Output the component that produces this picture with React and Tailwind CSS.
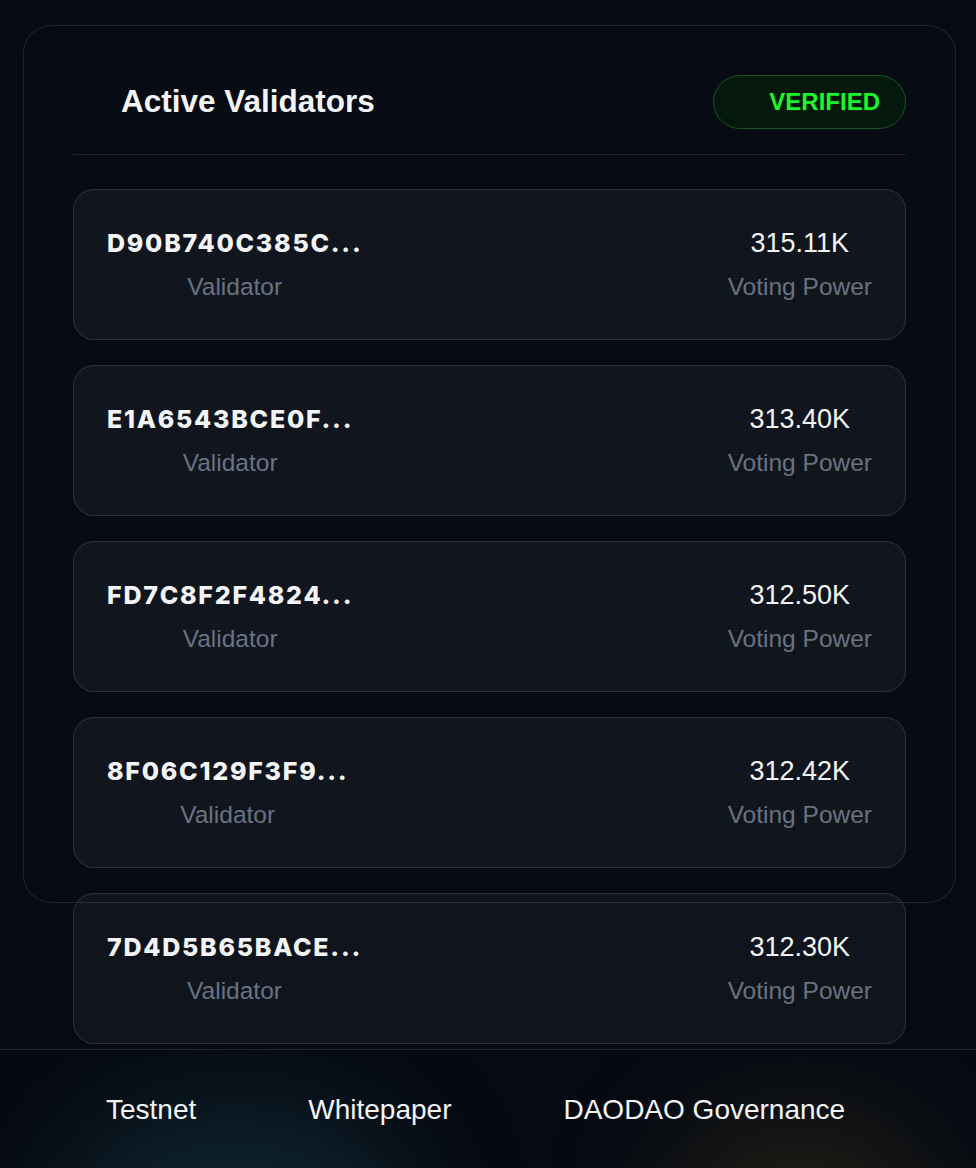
import React from 'react';

const validators = [
  { id: 'D90B740C385C...', power: '315.11K' },
  { id: 'E1A6543BCE0F...', power: '313.40K' },
  { id: 'FD7C8F2F4824...', power: '312.50K' },
  { id: '8F06C129F3F9...', power: '312.42K' },
  { id: '7D4D5B65BACE...', power: '312.30K' },
];

function ValidatorRow({ id, power }) {
  return (
    <div className="flex h-[151px] items-center justify-between rounded-[21px] border border-white/[0.12] bg-white/[0.045] px-[33px]">
      <div className="flex flex-col items-center text-center">
        <span className="font-['Inter',sans-serif] text-[25px] font-extrabold leading-[32px] tracking-[0.07em] text-gray-100">
          {id}
        </span>
        <span className="mt-3 text-[24.5px] leading-[32px] text-gray-500">Validator</span>
      </div>
      <div className="flex flex-col items-center text-center">
        <span className="text-[27px] leading-[32px] text-gray-100">{power}</span>
        <span className="mt-3 text-[24.5px] leading-[32px] text-gray-500">Voting Power</span>
      </div>
    </div>
  );
}

export default function App() {
  return (
    <div className="min-h-screen bg-[#060a12] font-['Liberation_Sans',Arial,sans-serif]">
      <main className="h-[1049px] pl-[23px] pr-[20px] pt-[25px]">
        <section className="h-[878px] rounded-[28px] border border-white/10 bg-[#070b14] px-[49px] pt-[49px]">
          <div className="flex items-center justify-between border-b border-white/10 pb-[25px]">
            <div className="flex items-center gap-4">
              <span className="h-8 w-8" />
              <h2 className="text-[31.5px] font-bold leading-none text-gray-100">Active Validators</h2>
            </div>
            <div className="flex h-[54px] w-[193px] items-center justify-end rounded-full border border-[#15561f] bg-[#04190c] pr-[25px]">
              <span className="text-[24px] font-bold text-[#1cf52a]">VERIFIED</span>
            </div>
          </div>

          <div className="mt-[34px] flex flex-col gap-[25px]">
            {validators.map((v) => (
              <ValidatorRow key={v.id} id={v.id} power={v.power} />
            ))}
          </div>
        </section>
      </main>

      <footer className="relative h-[119px] overflow-hidden border-t border-white/10">
        <div className="absolute left-[70px] top-[70px] h-[240px] w-[330px] rounded-full bg-[#1e5766]/40 blur-3xl" />
        <div className="absolute left-[670px] top-[75px] h-[220px] w-[260px] rounded-full bg-[#6b5520]/30 blur-3xl" />
        <nav className="relative flex items-center gap-[112px] pl-[106px] pt-[44px] text-[28px] leading-[32px] text-gray-100">
          <a href="#">Testnet</a>
          <a href="#">Whitepaper</a>
          <a href="#">DAODAO Governance</a>
        </nav>
      </footer>
    </div>
  );
}
